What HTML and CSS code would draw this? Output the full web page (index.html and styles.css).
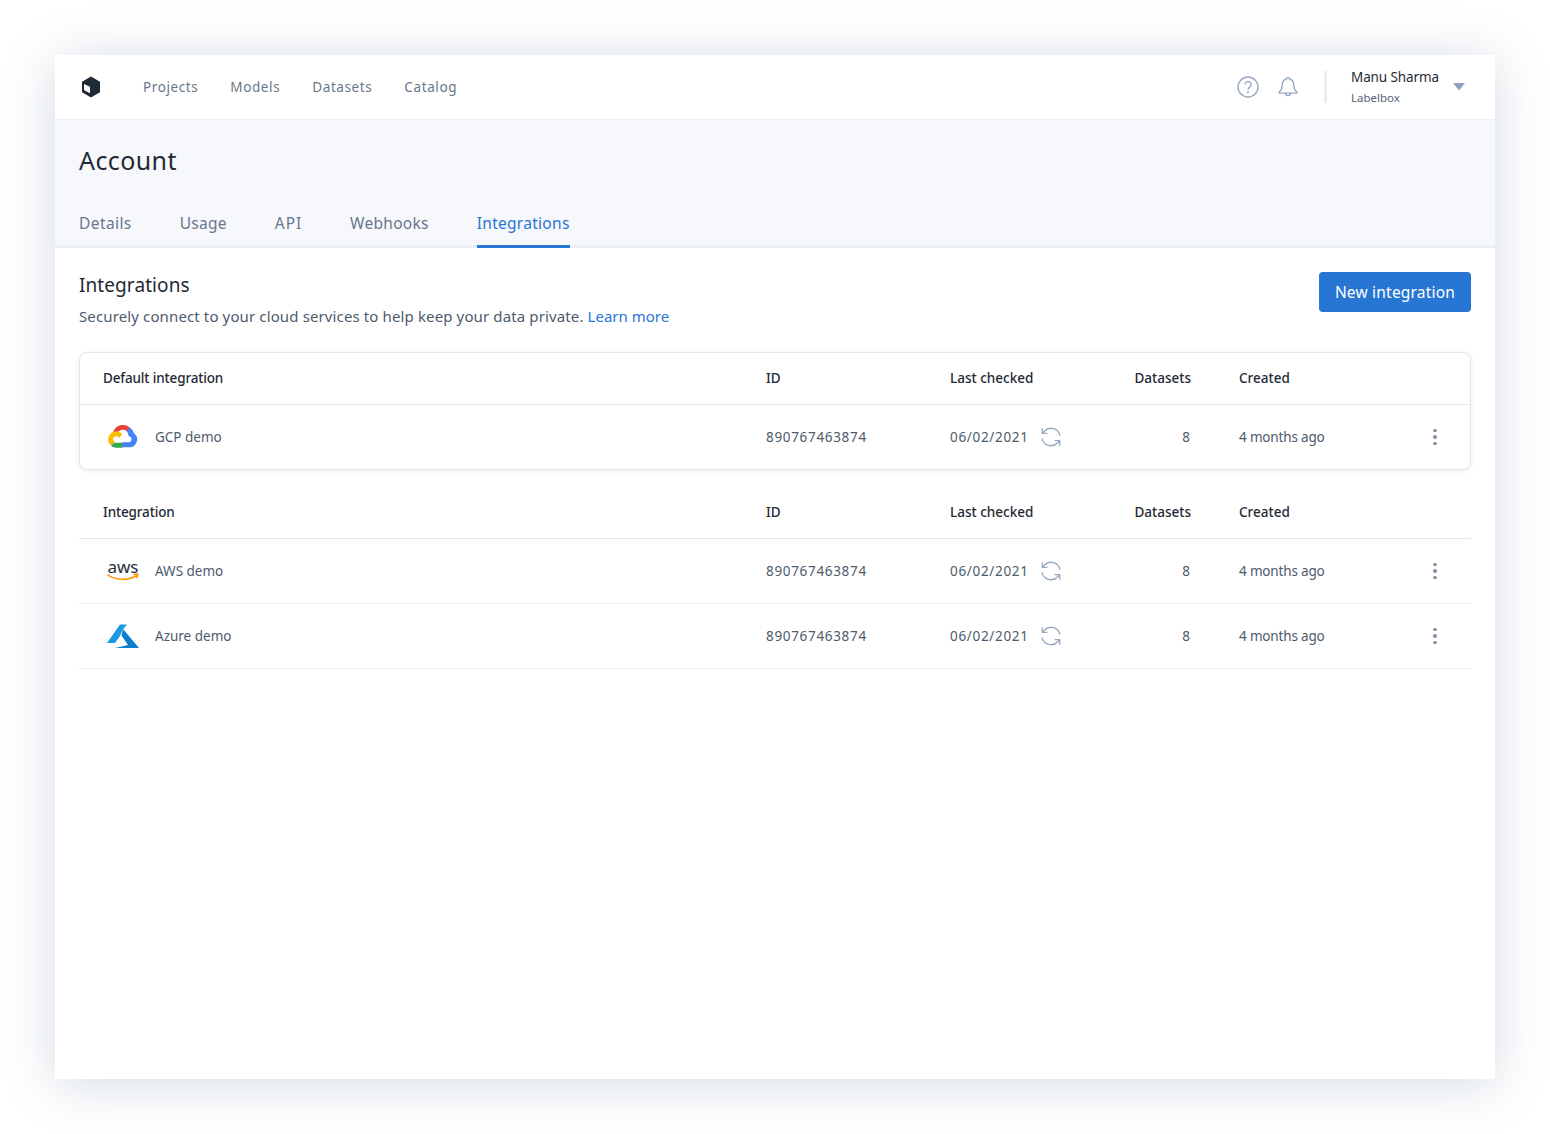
FILE: index.html
```html
<!DOCTYPE html>
<html lang="en">
<head>
<meta charset="utf-8">
<title>Account – Integrations</title>
<link rel="stylesheet" href="styles.css">
</head>
<body>
<svg class="defs" width="0" height="0" aria-hidden="true">
  <defs>
    <symbol id="sync" viewBox="0 0 20 20">
      <path d="M19 8.700A9.200 9.200 0 0 0 3.300 4.200L1.300 6.300M1.300 1.200v5.100h5.100" fill="none" stroke="#95a8c0" stroke-width="1.300"/>
      <path d="M1 11.300A9.200 9.200 0 0 0 16.700 15.800l2-2.100M18.700 18.800v-5.100h-5.100" fill="none" stroke="#95a8c0" stroke-width="1.300"/>
    </symbol>
    <symbol id="aws" viewBox="0 0 32 22">
      <text x="16" y="12.500" text-anchor="middle" class="aws-word">aws</text>
      <path d="M1 15.200c8 5.200 20 5.600 28.600.6" fill="none" stroke="#f90" stroke-width="1.600" stroke-linecap="round"/>
      <path d="M26.400 14.400l4.600-.4-1.600 4.200" fill="none" stroke="#f90" stroke-width="1.500" stroke-linejoin="round"/>
    </symbol>
  </defs>
</svg>
<main class="frame">
  <header class="topbar">
    <svg class="logo" width="20" height="22" viewBox="0 0 20 22">
      <path fill-rule="evenodd" d="M10 0.500l9 5.200v10.600l-9 5.200-9-5.200V5.700zM3 8l6 2.700v6.600l-6-3.300z" fill="#1f2a35"/>
    </svg>
    <nav class="nav">
      <a class="nav-link">Projects</a>
      <a class="nav-link">Models</a>
      <a class="nav-link">Datasets</a>
      <a class="nav-link">Catalog</a>
    </nav>
    <div class="top-right">
      <svg class="top-icon" width="22" height="22" viewBox="0 0 22 22">
        <circle cx="11" cy="11" r="10" fill="none" stroke="#95a8c0" stroke-width="1.400"/>
        <path d="M8 8.600a3 3 0 1 1 4.600 2.500c-1 .7-1.600 1.200-1.600 2.600" fill="none" stroke="#95a8c0" stroke-width="1.400"/>
        <circle cx="11" cy="16.300" r="1" fill="#95a8c0"/>
      </svg>
      <svg class="top-icon" width="22" height="22" viewBox="0 0 22 22">
        <path d="M11 1.500a1.500 1.500 0 0 1 1.500 1.500c3 .8 4.300 3.200 4.300 6 0 4 1 5.300 3 7v1.200H2.200V16c2-1.700 3-3 3-7 0-2.800 1.300-5.200 4.300-6A1.500 1.500 0 0 1 11 1.500z" fill="none" stroke="#95a8c0" stroke-width="1.300" stroke-linejoin="round"/>
        <path d="M8.300 17.500a2.800 2.800 0 0 0 5.400 0" fill="none" stroke="#95a8c0" stroke-width="1.300"/>
      </svg>
      <div class="top-sep"></div>
      <div class="user">
        <div class="user-name">Manu Sharma</div>
        <div class="user-org">Labelbox</div>
      </div>
      <svg class="caret" width="12" height="8" viewBox="0 0 12 8"><path d="M0 0h12L6 7.500z" fill="#8fa3bd"/></svg>
    </div>
  </header>

  <section class="page-head">
    <h1 class="page-title">Account</h1>
    <div class="tabs">
      <a class="tab tab-details">Details</a>
      <a class="tab">Usage</a>
      <a class="tab tab-api">API</a>
      <a class="tab">Webhooks</a>
      <a class="tab tab-active">Integrations</a>
    </div>
  </section>

  <section class="content">
    <div class="intro">
      <div>
        <h2 class="intro-title">Integrations</h2>
        <p class="intro-text">Securely connect to your cloud services to help keep your data private. <a class="link">Learn more</a></p>
      </div>
      <button class="btn">New integration</button>
    </div>

    <div class="card">
      <div class="row row-head">
        <div class="head-name">Default integration</div><div>ID</div><div>Last checked</div><div class="num">Datasets</div><div>Created</div><div></div>
      </div>
      <div class="row row-body row-last">
        <div class="name-cell">
          <svg class="brand" width="32" height="24" viewBox="0 0 32 24">
            <path d="M20 6.200l2.600-2.600.2-1.100A10.400 10.400 0 0 0 6 7.400l.9-.1 5-.8.4-.4A5.700 5.700 0 0 1 20 6.200z" fill="#ea4335"/>
            <path d="M27 8.200A10.300 10.300 0 0 0 22.800 2.500l-3.500 3.500a5.800 5.800 0 0 1 2.200 4.600v.6a3 3 0 0 1 0 6h-6.200l-.6.700v3.700l.6.6h6.200A7.800 7.800 0 0 0 27 8.200z" fill="#4285f4"/>
            <path d="M9.100 22.700h6.200v-5H9.100a3 3 0 0 1-1.300-.3l-.9.3-2.500 2.500-.2.800a7.700 7.700 0 0 0 4.900 1.700z" fill="#34a853"/>
            <path d="M9.100 6.600A7.800 7.800 0 0 0 4.200 20.500l3.600-3.600a3 3 0 1 1 4-4l3.600-3.600a7.800 7.800 0 0 0-6.300-2.700z" fill="#fbbc05"/>
          </svg>
          <span>GCP demo</span>
        </div>
        <div class="mono">890767463874</div>
        <div class="check-cell"><span class="mono">06/02/2021</span><svg class="sync" width="20" height="20"><use href="#sync"/></svg></div>
        <div class="num">8</div>
        <div class="ago">4 months ago</div>
        <div class="more"><i></i><i></i><i></i></div>
      </div>
    </div>

    <div class="plain">
      <div class="row row-head">
        <div class="head-name">Integration</div><div>ID</div><div>Last checked</div><div class="num">Datasets</div><div>Created</div><div></div>
      </div>
      <div class="row row-body">
        <div class="name-cell">
          <svg class="brand" width="32" height="24" viewBox="0 0 32 22"><use href="#aws"/></svg>
          <span>AWS demo</span>
        </div>
        <div class="mono">890767463874</div>
        <div class="check-cell"><span class="mono">06/02/2021</span><svg class="sync" width="20" height="20"><use href="#sync"/></svg></div>
        <div class="num">8</div>
        <div class="ago">4 months ago</div>
        <div class="more"><i></i><i></i><i></i></div>
      </div>
      <div class="row row-body">
        <div class="name-cell">
          <svg class="brand" width="32" height="24" viewBox="0 0 32 24">
            <path d="M13 .5h7L15.500 6 13 12l-5 7H0z" fill="#1a9ae0"/>
            <path d="M16 5l16 19H8l13-3L14.500 11.500z" fill="#0a7fd0"/>
          </svg>
          <span>Azure demo</span>
        </div>
        <div class="mono">890767463874</div>
        <div class="check-cell"><span class="mono">06/02/2021</span><svg class="sync" width="20" height="20"><use href="#sync"/></svg></div>
        <div class="num">8</div>
        <div class="ago">4 months ago</div>
        <div class="more"><i></i><i></i><i></i></div>
      </div>
    </div>
  </section>
</main>
</body>
</html>
```
FILE: styles.css
```css
* { box-sizing: border-box; }
html, body { margin: 0; height: 100%; }
body {
  height: 1134px;
  padding: 55px;
  background: #fff;
  font-family: "Noto Sans", "Open Sans", sans-serif;
  color: #1f2a35;
  overflow: hidden;
}
.defs { position: absolute; }
.frame {
  width: 1440px;
  height: 1024px;
  background: #fff;
  box-shadow: 0 5px 50px rgba(60, 90, 130, 0.22);
}
.topbar {
  height: 65px;
  display: flex;
  align-items: center;
  padding: 0 30px 0 26px;
  border-bottom: 1px solid #eceff5;
}
.logo { display: block; margin-right: 42px; }
.nav { display: flex; gap: 32px; }
.nav-link {
  font-size: 13.5px;
  letter-spacing: 0.6px;
  color: #67778c;
}
.top-right { margin-left: auto; display: flex; align-items: center; }
.top-icon { display: block; margin-right: 18px; }
.top-sep { width: 3px; height: 32px; background: #eaeef4; margin: 0 24px 0 7px; }
.user { width: 102px; }
.user-name { font-size: 13.5px; line-height: 20px; letter-spacing: -0.1px; color: #1f2a35; }
.user-org { font-size: 11.5px; line-height: 20px; color: #566477; margin-top: 1px; }
.caret { display: block; }
.page-head {
  height: 128px;
  background: #f7f8fc;
  border-bottom: 3px solid #eceff5;
  padding: 23px 24px 0;
}
.page-title {
  margin: 0;
  font-size: 25px;
  line-height: 34px;
  letter-spacing: 0.4px;
  font-weight: 400;
  color: #1f2a35;
}
.tabs { display: flex; gap: 48px; margin-top: 30px; }
.tab {
  font-size: 15.5px;
  line-height: 22px;
  letter-spacing: 0.28px;
  padding: 5px 0 11px;
  color: #67778c;
  height: 41px;
}
.tab-details { letter-spacing: 0.42px; }
.tab-api { letter-spacing: 0.9px; }
.tab-active { color: #2876d4; border-bottom: 3px solid #2876d4; }
.content { padding: 24px; }
.intro { display: flex; justify-content: space-between; align-items: flex-start; height: 80px; }
.intro-title { margin: 0; font-size: 19px; line-height: 27px; letter-spacing: 0.08px; font-weight: 400; color: #1f2a35; }
.intro-text { margin: 6px 0 0; font-size: 15px; line-height: 22px; letter-spacing: 0.125px; color: #4d5b6d; }
.link { color: #2876d4; letter-spacing: 0; }
.btn {
  width: 152px;
  height: 40px;
  border: 0;
  border-radius: 4px;
  background: #2876d4;
  color: #fff;
  font: inherit;
  font-size: 15.5px;
  letter-spacing: 0.2px;
}
.card {
  border: 1px solid #e1e6f0;
  border-radius: 8px;
  box-shadow: 0 1px 4px rgba(50, 70, 110, 0.1);
  margin-bottom: 16px;
}
.row {
  display: grid;
  grid-template-columns: 663px 184px 184px 57px 196px 1fr;
  align-items: center;
  padding-left: 24px;
  font-size: 13.5px;
}
.card .row { padding-left: 23px; }
.row > :nth-child(5) { margin-left: 48px; white-space: nowrap; }
.row-head { height: 52px; font-weight: 500; color: #1f2a35; border-bottom: 1px solid #e1e6f0; }
.head-name { letter-spacing: -0.15px; }
.card .row-head { padding-bottom: 2px; }
.row-body { height: 65px; color: #4d5b6d; border-bottom: 1px solid #eceff5; }
.row-last { border-bottom: 0; height: 64px; }
.plain .row-head { height: 53px; }
.num { text-align: right; }
.row-body .num { padding-right: 1px; }
.mono { letter-spacing: 0.68px; }
.ago { letter-spacing: -0.17px; }
.name-cell { display: flex; align-items: center; gap: 16px; padding-left: 4px; }
.brand { display: block; flex: none; }
.aws-word { font: 400 17px "Noto Sans", sans-serif; fill: #252f3e; }
.check-cell { display: flex; align-items: center; gap: 12px; }
.sync { display: block; }
.more { display: flex; flex-direction: column; align-items: center; gap: 3px; width: 4px; margin-left: 46px; }
.more i { display: block; width: 3.5px; height: 3.5px; border-radius: 50%; background: #8295ad; }
```
